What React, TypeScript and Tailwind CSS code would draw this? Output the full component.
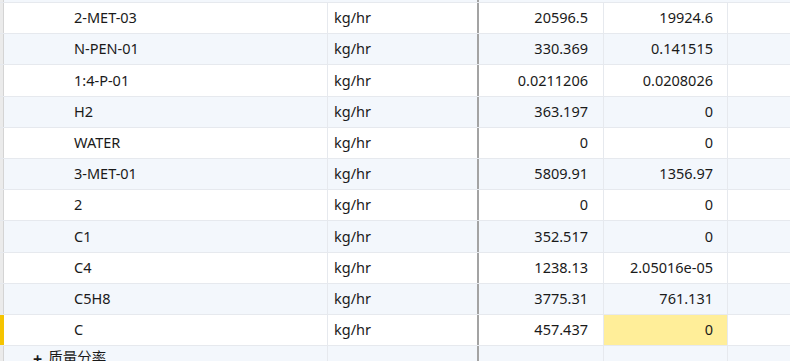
import React from "react";

const rows: [string, string, string, boolean?][] = [
  ["2-MET-03", "20596.5", "19924.6"],
  ["N-PEN-01", "330.369", "0.141515"],
  ["1:4-P-01", "0.0211206", "0.0208026"],
  ["H2", "363.197", "0"],
  ["WATER", "0", "0"],
  ["3-MET-01", "5809.91", "1356.97"],
  ["2", "0", "0"],
  ["C1", "352.517", "0"],
  ["C4", "1238.13", "2.05016e-05"],
  ["C5H8", "3775.31", "761.131"],
  ["C", "457.437", "0", true],
];

function Row({
  name,
  a,
  b,
  odd,
  active,
}: {
  name: string;
  a: string;
  b: string;
  odd: boolean;
  active?: boolean;
}) {
  const bg = odd ? "bg-[#f3f7fc]" : "bg-white";
  return (
    <div className={`flex h-[31.2px] shrink-0 border-b border-[#e6e9ee] ${bg}`}>
      <div
        className={`w-[4px] shrink-0 border-r ${
          active ? "bg-[#f5c400] border-[#f5c400]" : "bg-[#ebebeb] border-[#d4d4d4]"
        }`}
      />
      <div className="flex w-[324px] shrink-0 items-center border-r border-[#e6e9ee] pl-[70px]">
        {name}
      </div>
      <div className="flex w-[149px] shrink-0 items-center pl-[6px]">kg/hr</div>
      <div className="w-[2px] shrink-0 bg-[#a3a3a3]" />
      <div className="flex w-[125px] shrink-0 items-center justify-end border-r border-[#e6e9ee] pr-[15px]">
        {a}
      </div>
      <div
        className={`flex w-[124px] shrink-0 items-center justify-end border-r border-[#e6e9ee] pr-[14px] ${
          active ? "bg-[#ffee99]" : ""
        }`}
      >
        {b}
      </div>
      <div className="flex-1" />
    </div>
  );
}

export default function App() {
  return (
    <div
      className="flex h-[361px] w-[790px] flex-col overflow-hidden bg-white text-[14.5px] text-[#1a1a1a]"
      style={{ fontFamily: '"Noto Sans", "Noto Sans CJK SC", sans-serif' }}
    >
      <div className="flex h-[3px] shrink-0 border-b border-[#e6e9ee] bg-[#f3f7fc]">
        <div className="w-[4px] shrink-0 border-r border-[#d4d4d4] bg-[#ebebeb]" />
        <div className="w-[473px] shrink-0" />
        <div className="w-[2px] shrink-0 bg-[#a3a3a3]" />
      </div>
      {rows.map(([name, a, b, active], i) => (
        <Row key={name} name={name} a={a} b={b} odd={i % 2 === 1} active={active} />
      ))}
      <div className="flex h-[31.2px] shrink-0 bg-[#f3f7fc]">
        <div className="w-[4px] shrink-0 border-r border-[#d4d4d4] bg-[#ebebeb]" />
        <div className="flex w-[324px] shrink-0 items-start gap-[6px] border-r border-[#e6e9ee] pl-[29px] pt-[1px]">
          <span className="mt-[4px] text-[16px] font-bold leading-none">+</span>
          <span className="leading-[20px]">质量分率</span>
        </div>
        <div className="w-[149px] shrink-0" />
        <div className="w-[2px] shrink-0 bg-[#a3a3a3]" />
        <div className="w-[125px] shrink-0 border-r border-[#e6e9ee]" />
        <div className="w-[124px] shrink-0 border-r border-[#e6e9ee]" />
      </div>
    </div>
  );
}
